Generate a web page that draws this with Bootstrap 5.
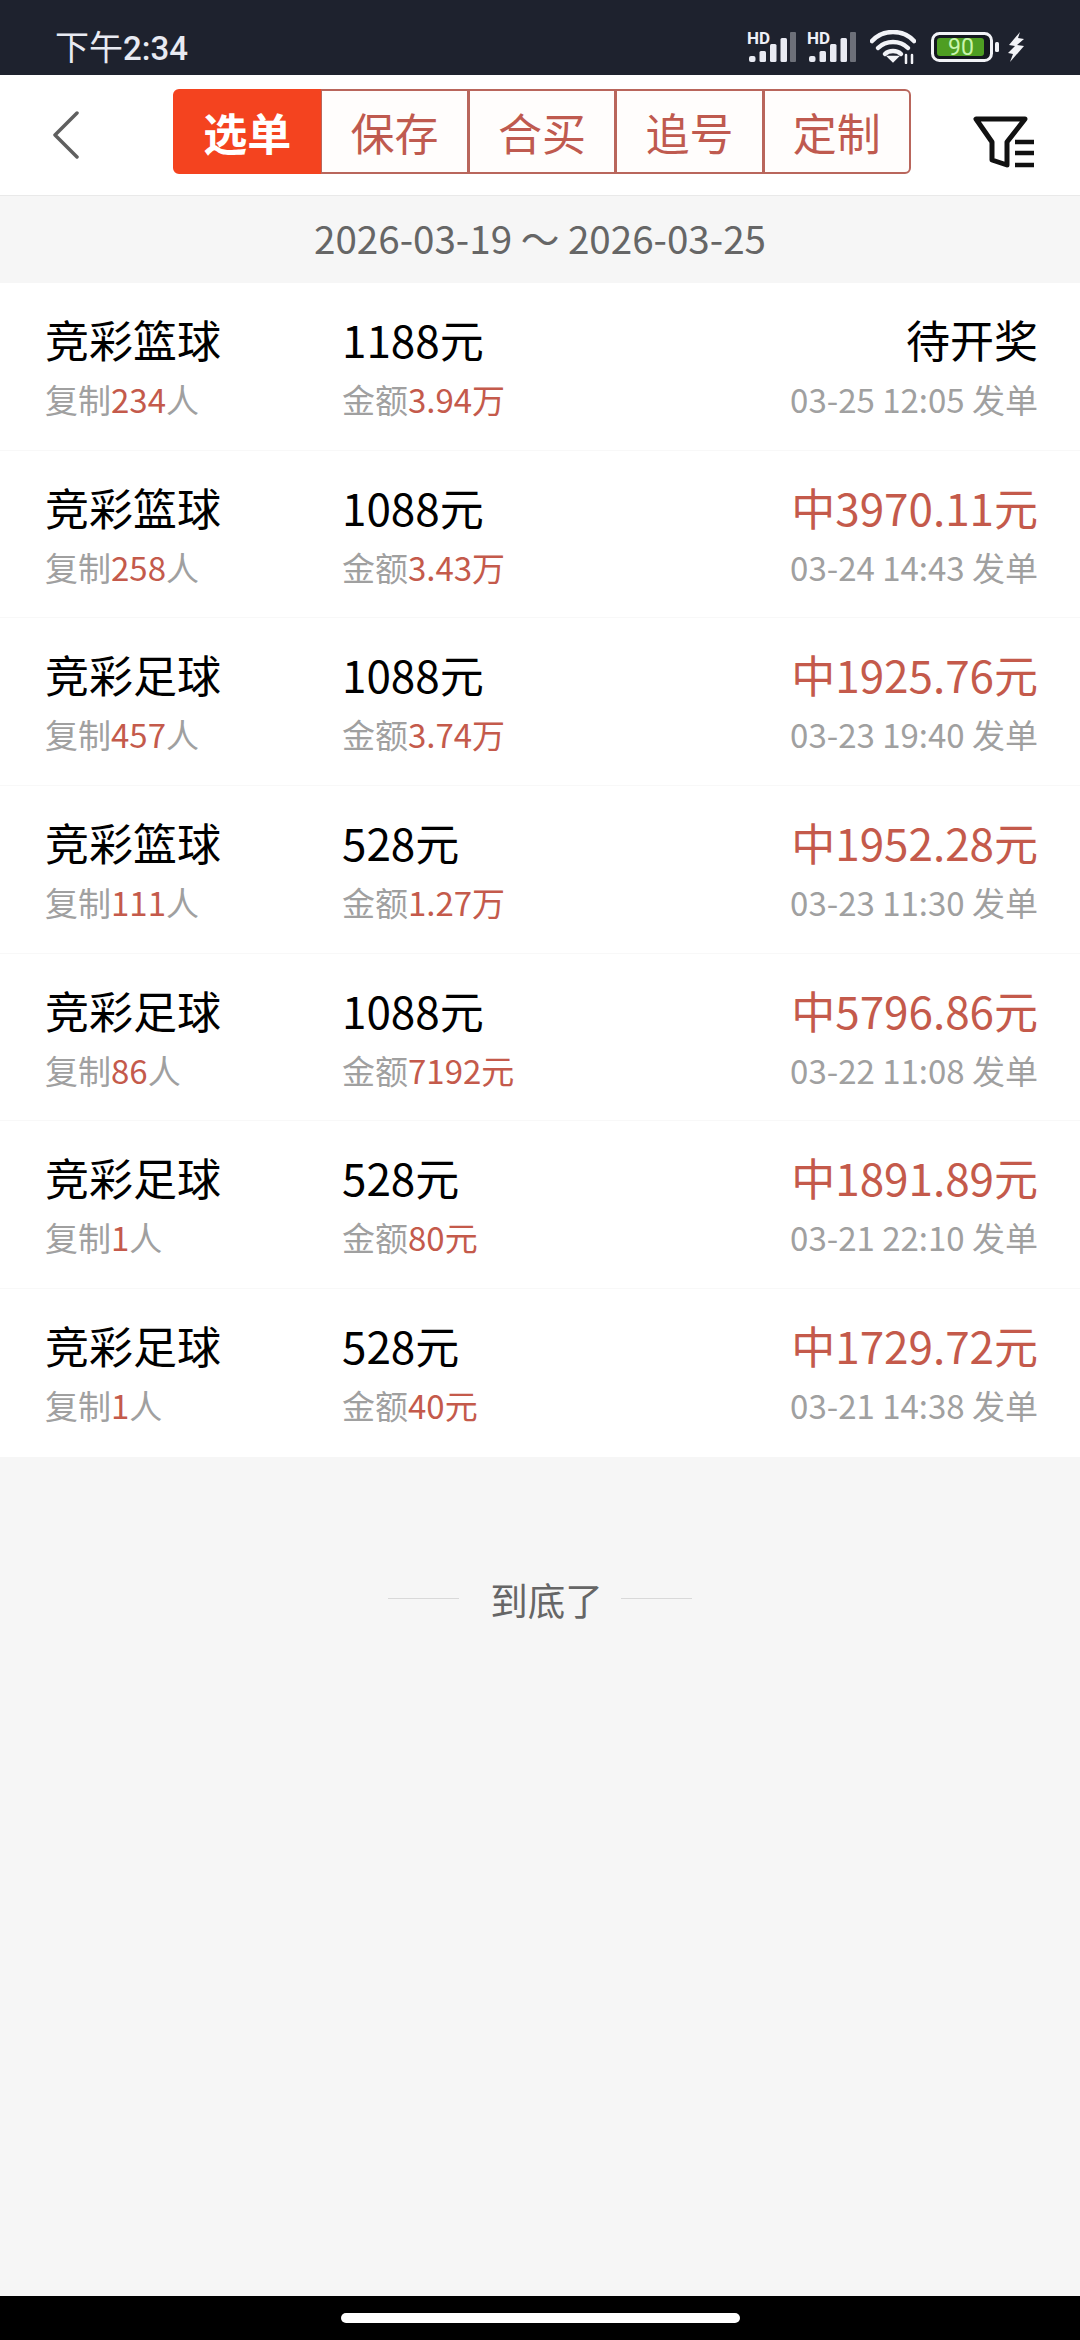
<!DOCTYPE html>
<html lang="zh-CN">
<head>
    <meta charset="UTF-8">
    <meta name="viewport" content="width=device-width, initial-scale=1.0">
    <title>选单</title>
    <link rel="stylesheet" href="https://cdn.jsdelivr.net/npm/bootstrap@5.3.0/dist/css/bootstrap.min.css">
    <style>
        body {
            background: #f6f6f6;
            font-family: "Noto Sans CJK SC", "Noto Sans", sans-serif;
            color: #000;
        }

        .app-screen {
            height: 2340px;
        }

        /* status bar */
        .status-bar {
            height: 75px;
            background: #1e222e;
            color: #e8eaf2;
            padding: 19px 55px 0;
        }

        .status-time {
            font-size: 34px;
            line-height: 1;
        }

        .status-time b {
            font-family: Roboto, sans-serif;
            font-weight: 500;
            font-size: 33px;
        }

        .status-icons svg {
            display: block;
        }

        .status-icons .sig-second {
            margin-left: 11px;
        }

        .status-icons .sig-wifi {
            margin-left: 14px;
        }

        .status-icons .sig-battery {
            margin-left: 15px;
        }

        .status-icons .sig-bolt {
            margin-left: 8px;
        }

        /* header */
        .top-bar {
            height: 121px;
            background: #fff;
            border-bottom: 1px solid #e9e9e9;
        }

        .back-slot {
            width: 175px;
            padding-left: 52px;
        }

        .tab-group {
            width: 736px;
            height: 85px;
            margin-top: -7px;
        }

        .tab-group .btn {
            flex: 1 1 0;
            padding: 0;
            font-size: 44px;
            line-height: 1;
            color: #bf5a4f;
            background: #fffdfc;
            border: 2px solid #b9665c;
            margin-left: -2px;
            --bs-border-radius: 12px;
        }

        .tab-group .btn.active {
            color: #fff;
            background: #f4431f;
            border-color: #f4431f;
            font-weight: 700;
        }

        .filter-slot {
            padding-left: 62px;
            margin-top: 14px;
        }

        /* date */
        .date-bar {
            height: 87px;
            padding-bottom: 4px;
            font-size: 38.6px;
            line-height: 1;
            color: #666;
        }

        /* rows */
        .order-list {
            --bs-list-group-bg: #fff;
            --bs-list-group-color: #000;
            --bs-list-group-border-color: #f8f8f8;
            --bs-list-group-item-padding-x: 0;
            --bs-list-group-item-padding-y: 0;
        }

        .order-row {
            height: 167.7px;
            padding: 0 42px 0 45px !important;
            display: flex;
        }

        .cell-kind {
            width: 297px;
        }

        .cell-amount {
            flex: 1;
        }

        .row-main {
            display: block;
            font-size: 44px;
            line-height: 60px;
            margin-top: 26px;
            white-space: nowrap;
        }

        .row-sub {
            display: block;
            font-size: 33px;
            line-height: 44px;
            margin-top: 8px;
            color: #a0a0a0;
            white-space: nowrap;
        }

        .row-sub em,
        .row-won {
            font-style: normal;
            color: #c45a4b;
        }

        /* end of list */
        .list-end {
            margin-top: 117px;
            height: 50px;
            font-size: 37.5px;
            line-height: 50px;
            color: #666;
        }

        .end-line {
            width: 71px;
            height: 1px;
            background: #d9d9d9;
            margin-top: -1px;
        }

        .end-text {
            margin: 0 18px 0 31px;
        }

        /* gesture bar */
        .gesture-bar {
            height: 44px;
            background: #000;
            padding-top: 17px;
        }

        .gesture-pill {
            width: 399px;
            height: 10px;
            background: #fff;
            border-radius: 5px;
        }
    </style>
</head>
<body>
    <div class="app-screen d-flex flex-column">
        <!-- Status bar -->
        <div class="status-bar d-flex align-items-center justify-content-between flex-shrink-0">
            <div class="status-time">下午<b>2:34</b></div>
            <div class="status-icons d-flex align-items-center">
                <svg width="49" height="44" viewBox="0 -6 49 44">
                    <text x="0" y="13" font-family="Roboto, sans-serif" font-weight="700" font-size="17" fill="#eef0f6">HD</text>
                    <rect x="2" y="25" width="6.5" height="6" rx="2" fill="#e8eaf2"/>
                    <rect x="12.5" y="20" width="6.5" height="11" rx="1.5" fill="#e8eaf2"/>
                    <rect x="23" y="13" width="6.5" height="18" rx="1.5" fill="#e8eaf2"/>
                    <rect x="33.5" y="7" width="6.5" height="24" rx="1.5" fill="#e8eaf2"/>
                    <rect x="43" y="1" width="6" height="30" rx="1" fill="#6d7079"/>
                </svg>
                <svg class="sig-second" width="49" height="44" viewBox="0 -6 49 44">
                    <text x="0" y="13" font-family="Roboto, sans-serif" font-weight="700" font-size="17" fill="#eef0f6">HD</text>
                    <rect x="2" y="25" width="6.5" height="6" rx="2" fill="#e8eaf2"/>
                    <rect x="12.5" y="20" width="6.5" height="11" rx="1.5" fill="#e8eaf2"/>
                    <rect x="23" y="13" width="6.5" height="18" rx="1.5" fill="#e8eaf2"/>
                    <rect x="33.5" y="7" width="6.5" height="24" rx="1.5" fill="#e8eaf2"/>
                    <rect x="43" y="1" width="6" height="30" rx="1" fill="#6d7079"/>
                </svg>
                <svg class="sig-wifi" width="46" height="34" viewBox="0 0 46 34" fill="none" stroke="#f2f3f7" stroke-width="4.5" stroke-linecap="round">
                    <path d="M2 11C13 -1 33 -1 44 11"/>
                    <path d="M8 18C16 10 30 10 38 18"/>
                    <path d="M15 24C19 20 27 20 31 24"/>
                    <path d="M19 27L23 31L27 27Z" stroke-width="2.5" fill="#f2f3f7"/>
                    <path d="M36 33V25M42 33V25" stroke-width="2.5"/>
                </svg>
                <svg class="sig-battery" width="68" height="30" viewBox="0 0 68 30">
                    <rect x="1.5" y="1.5" width="59" height="27" rx="7" fill="#14181f" stroke="#f2f3f7" stroke-width="3"/>
                    <rect x="6" y="6" width="47" height="18" rx="3" fill="#4e9e22"/>
                    <text x="30" y="23" text-anchor="middle" font-family="Roboto, sans-serif" font-size="23" fill="#c9f5ae">90</text>
                    <rect x="64" y="10" width="4" height="10" rx="1.5" fill="#f2f3f7"/>
                </svg>
                <svg class="sig-bolt" width="18" height="30" viewBox="0 0 18 30">
                    <path d="M13 0L2 13L8 14L1 21L6 22L3 30L17 14L10 13L17 7L11 6Z" fill="#f2f3f7"/>
                </svg>
            </div>
        </div>

        <!-- Header -->
        <div class="top-bar d-flex align-items-center flex-shrink-0">
            <div class="back-slot">
                <svg class="d-block" width="27" height="50" viewBox="0 0 27 50" fill="none" stroke="#5f5f5f" stroke-width="3.5" stroke-linecap="round" stroke-linejoin="round">
                    <path d="M25 3L3 25L25 47"/>
                </svg>
            </div>
            <div class="btn-group tab-group" role="group">
                <button type="button" class="btn active">选单</button>
                <button type="button" class="btn">保存</button>
                <button type="button" class="btn">合买</button>
                <button type="button" class="btn">追号</button>
                <button type="button" class="btn">定制</button>
            </div>
            <div class="filter-slot">
                <svg class="d-block" width="62" height="52" viewBox="0 0 62 52" fill="none" stroke="#111" stroke-width="5">
                    <path d="M3 3H52L34 26V49L19 44V26Z" stroke-linejoin="round"/>
                    <path d="M42 26H61M42 37H61M42 49H61" stroke-width="4.5"/>
                </svg>
            </div>
        </div>

        <!-- Date range -->
        <div class="date-bar d-flex align-items-center justify-content-center flex-shrink-0">2026-03-19 〜 2026-03-25</div>

        <!-- Orders -->
        <ul class="list-group list-group-flush order-list flex-shrink-0">
            <li class="list-group-item order-row">
                <div class="cell-kind"><span class="row-main">竞彩篮球</span><span class="row-sub">复制<em>234</em>人</span></div>
                <div class="cell-amount"><span class="row-main">1188元</span><span class="row-sub">金额<em>3.94万</em></span></div>
                <div class="text-end"><span class="row-main">待开奖</span><span class="row-sub">03-25 12:05 发单</span></div>
            </li>
            <li class="list-group-item order-row">
                <div class="cell-kind"><span class="row-main">竞彩篮球</span><span class="row-sub">复制<em>258</em>人</span></div>
                <div class="cell-amount"><span class="row-main">1088元</span><span class="row-sub">金额<em>3.43万</em></span></div>
                <div class="text-end"><span class="row-main row-won">中3970.11元</span><span class="row-sub">03-24 14:43 发单</span></div>
            </li>
            <li class="list-group-item order-row">
                <div class="cell-kind"><span class="row-main">竞彩足球</span><span class="row-sub">复制<em>457</em>人</span></div>
                <div class="cell-amount"><span class="row-main">1088元</span><span class="row-sub">金额<em>3.74万</em></span></div>
                <div class="text-end"><span class="row-main row-won">中1925.76元</span><span class="row-sub">03-23 19:40 发单</span></div>
            </li>
            <li class="list-group-item order-row">
                <div class="cell-kind"><span class="row-main">竞彩篮球</span><span class="row-sub">复制<em>111</em>人</span></div>
                <div class="cell-amount"><span class="row-main">528元</span><span class="row-sub">金额<em>1.27万</em></span></div>
                <div class="text-end"><span class="row-main row-won">中1952.28元</span><span class="row-sub">03-23 11:30 发单</span></div>
            </li>
            <li class="list-group-item order-row">
                <div class="cell-kind"><span class="row-main">竞彩足球</span><span class="row-sub">复制<em>86</em>人</span></div>
                <div class="cell-amount"><span class="row-main">1088元</span><span class="row-sub">金额<em>7192元</em></span></div>
                <div class="text-end"><span class="row-main row-won">中5796.86元</span><span class="row-sub">03-22 11:08 发单</span></div>
            </li>
            <li class="list-group-item order-row">
                <div class="cell-kind"><span class="row-main">竞彩足球</span><span class="row-sub">复制<em>1</em>人</span></div>
                <div class="cell-amount"><span class="row-main">528元</span><span class="row-sub">金额<em>80元</em></span></div>
                <div class="text-end"><span class="row-main row-won">中1891.89元</span><span class="row-sub">03-21 22:10 发单</span></div>
            </li>
            <li class="list-group-item order-row">
                <div class="cell-kind"><span class="row-main">竞彩足球</span><span class="row-sub">复制<em>1</em>人</span></div>
                <div class="cell-amount"><span class="row-main">528元</span><span class="row-sub">金额<em>40元</em></span></div>
                <div class="text-end"><span class="row-main row-won">中1729.72元</span><span class="row-sub">03-21 14:38 发单</span></div>
            </li>
        </ul>

        <!-- End marker -->
        <div class="list-end d-flex align-items-center justify-content-center flex-shrink-0">
            <span class="end-line"></span>
            <span class="end-text">到底了</span>
            <span class="end-line"></span>
        </div>

        <!-- Gesture bar -->
        <div class="gesture-bar d-flex justify-content-center flex-shrink-0 mt-auto">
            <div class="gesture-pill"></div>
        </div>
    </div>

    <script src="https://cdn.jsdelivr.net/npm/bootstrap@5.3.0/dist/js/bootstrap.bundle.min.js"></script>
</body>
</html>
